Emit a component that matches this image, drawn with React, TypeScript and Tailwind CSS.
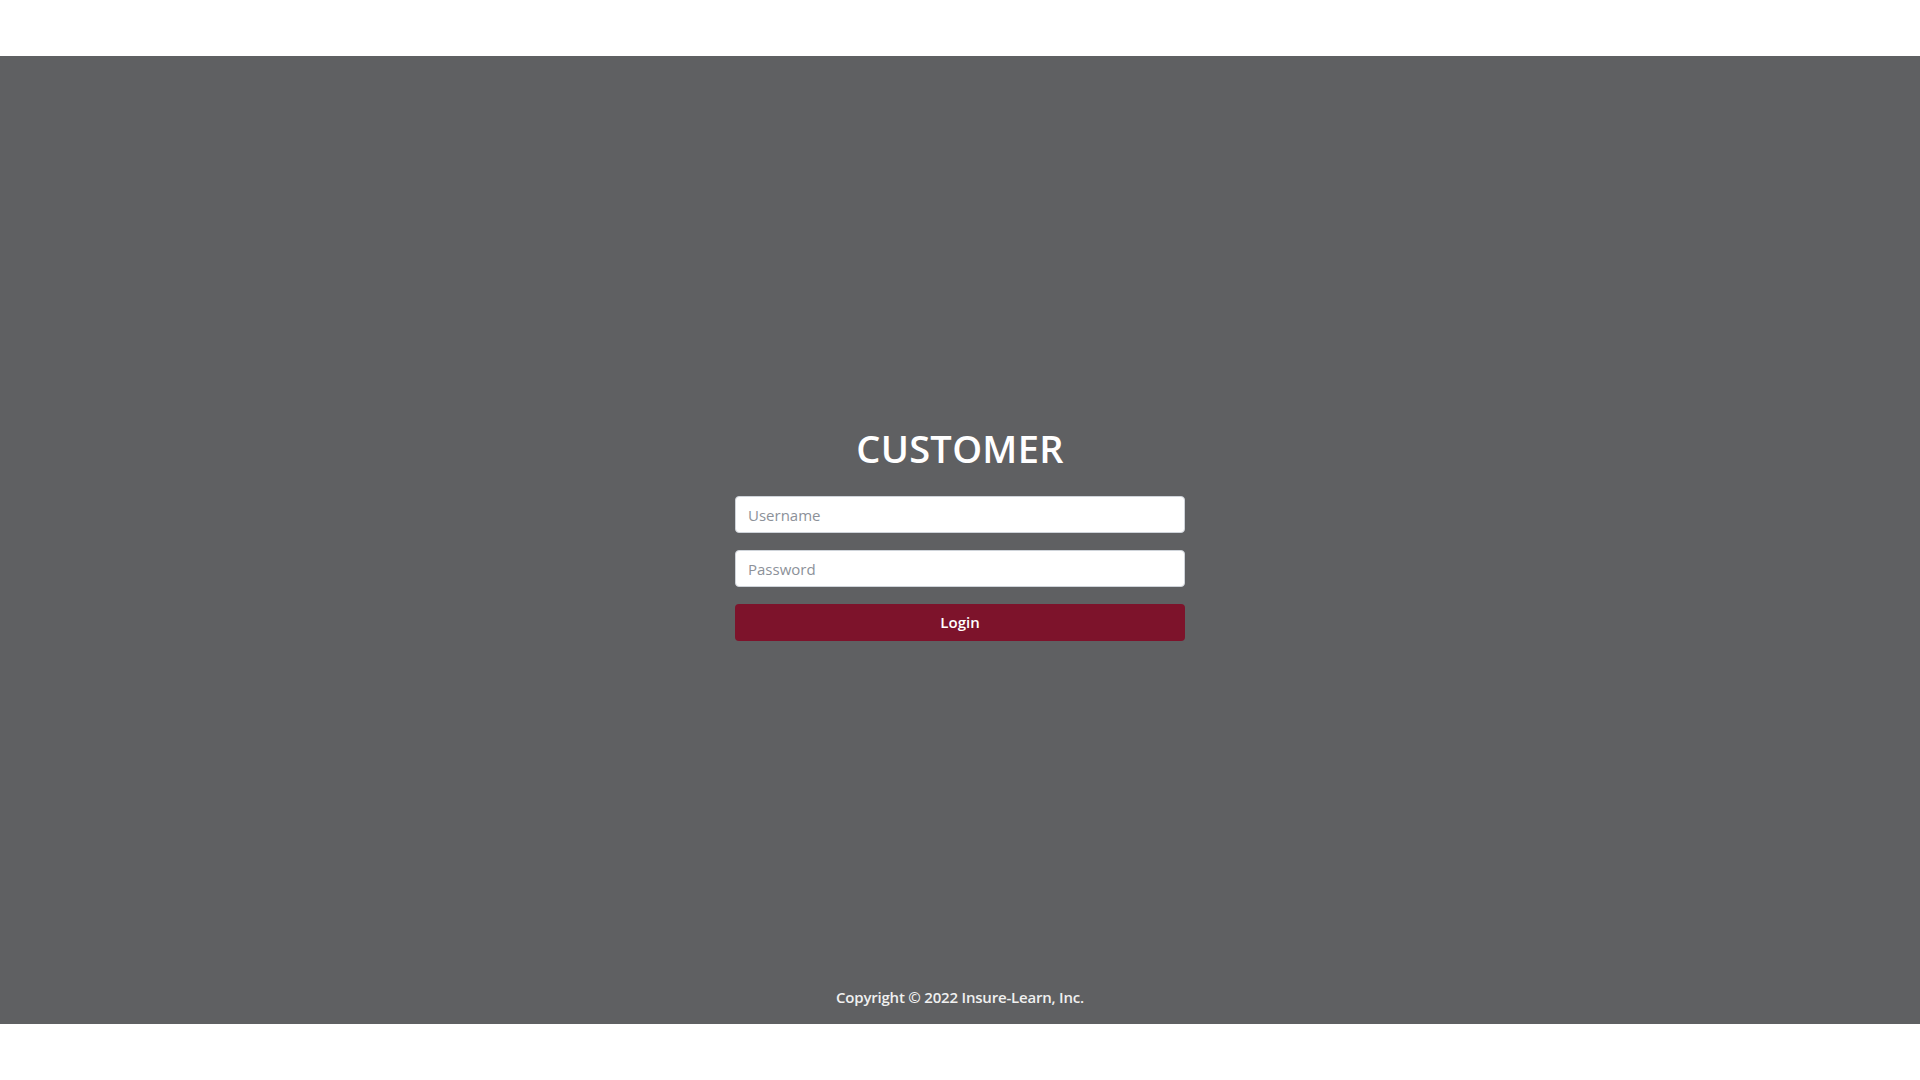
export default function App() {
  return (
    <div className="min-h-screen bg-white" style={{ fontFamily: '"Open Sans", "Noto Sans", sans-serif' }}>
      <div className="h-14" />
      <div className="h-[968px] bg-[#5f6062] flex flex-col items-center justify-between">
        <div className="flex flex-col items-center pt-[369px]">
          <h1 className="text-[38px] leading-[46px] font-semibold text-white tracking-[0.3px]">CUSTOMER</h1>
          <form className="mt-[25px] w-[450px] flex flex-col gap-[17px]" onSubmit={(e) => e.preventDefault()}>
            <input
              type="text"
              placeholder="Username"
              className="h-[37px] w-full rounded-[4px] border border-[#cfd4da] bg-white px-3 text-[15px] text-[#333] placeholder:text-[#8c9199] outline-none"
            />
            <input
              type="password"
              placeholder="Password"
              className="h-[37px] w-full rounded-[4px] border border-[#cfd4da] bg-white px-3 text-[15px] text-[#333] placeholder:text-[#8c9199] outline-none"
            />
            <button
              type="submit"
              className="h-[37px] w-full rounded-[4px] bg-[#7d132b] text-[15px] font-semibold text-white"
            >
              Login
            </button>
          </form>
        </div>
        <p className="pb-[17px] text-[15px] leading-[20px] font-semibold tracking-[-0.2px] text-[#f0f0f0]">
          Copyright © 2022 Insure-Learn, Inc.
        </p>
      </div>
    </div>
  );
}
